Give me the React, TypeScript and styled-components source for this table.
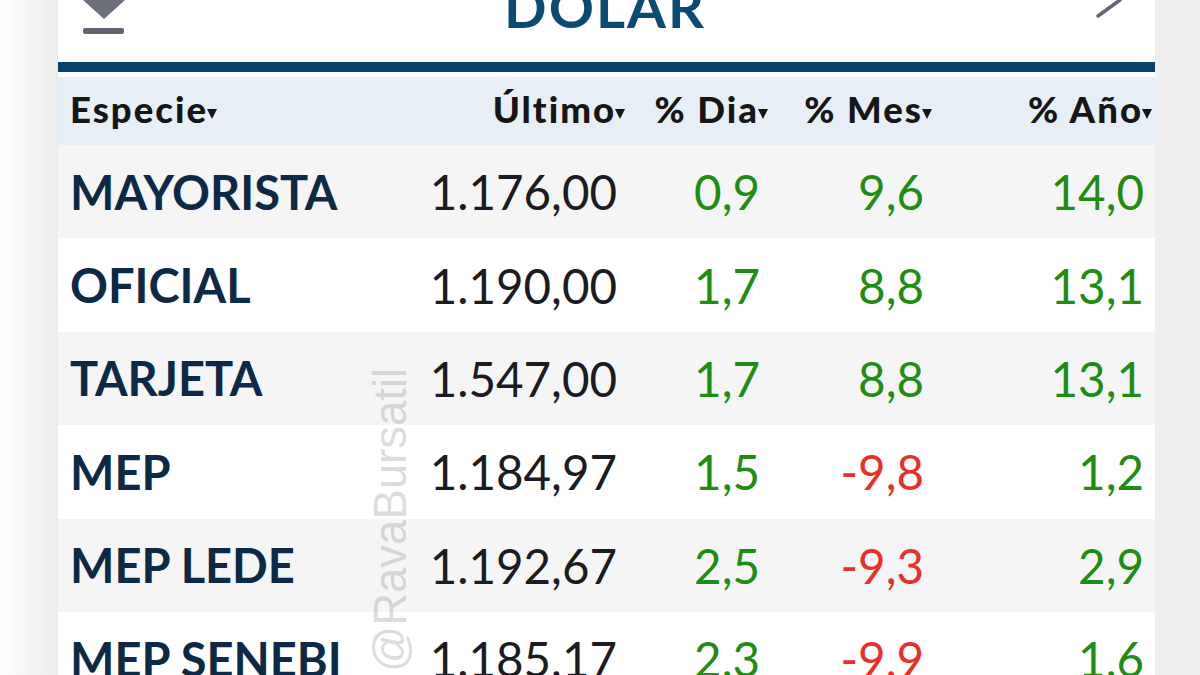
import styled, { createGlobalStyle } from 'styled-components';

const GlobalStyle = createGlobalStyle`
    html, body {
        margin: 0;
        padding: 0;
        overflow: hidden;
    }
    body {
        width: 1200px;
        height: 675px;
        background: linear-gradient(to right, #ffffff 0px, #ececec 56px, #eeeeee 100%);
        font-family: Lato, "Noto Sans", sans-serif;
    }
`;

const Page = styled.div`
    display: flex;
    height: 675px;
    padding: 0 45px 0 58px;
    box-sizing: border-box;
`;

const Card = styled.div`
    position: relative;
    flex: 1;
    background: #ffffff;
`;

const TitleBar = styled.div`
    display: grid;
    grid-template-columns: 80px 1fr 80px;
    align-items: start;
    height: 62px;
    border-bottom: 10px solid #08416a;
    margin-bottom: 5px;
    overflow: hidden;
`;

const IconSlot = styled.div<{ $align: 'start' | 'end' }>`
    display: flex;
    justify-content: ${(p) => (p.$align === 'start' ? 'flex-start' : 'flex-end')};
    padding: ${(p) => (p.$align === 'start' ? '0 0 0 24px' : '0 30px 0 0')};
`;

const Title = styled.h1`
    margin: -21px 0 0 0;
    text-align: center;
    font-size: 56px;
    line-height: 56px;
    font-weight: 700;
    letter-spacing: 2px;
    color: #0d4a72;
    padding-right: 3px;
`;

const Grid = styled.div`
    display: grid;
    grid-template-columns: 342px 228px 143px 164px 1fr;
`;

const Row = styled.div<{ $shade?: boolean; $head?: boolean }>`
    display: contents;
    & > div {
        background: ${(p) => (p.$head ? '#e8eef5' : p.$shade ? '#f5f5f5' : '#ffffff')};
        height: ${(p) => (p.$head ? '68px' : '93.4px')};
    }
`;

const HeadCell = styled.div<{ $left?: boolean }>`
    display: flex;
    align-items: center;
    justify-content: ${(p) => (p.$left ? 'flex-start' : 'flex-end')};
    padding: ${(p) => (p.$left ? '0 0 5px 12px' : '0 3px 5px 0')};
    box-sizing: border-box;
    font-size: 36.5px;
    font-weight: 900;
    letter-spacing: 2px;
    color: #161616;
    white-space: nowrap;
`;

const Caret = styled.span`
    display: inline-block;
    width: 0;
    height: 0;
    margin: 10px 0 0 -1px;
    border-left: 5px solid transparent;
    border-right: 5px solid transparent;
    border-top: 10px solid #161616;
`;

const NameCell = styled.div`
    display: flex;
    align-items: center;
    padding-left: 12px;
    font-size: 47px;
    font-weight: 700;
    color: #0e2945;
    white-space: nowrap;
`;

const ValueCell = styled.div<{ $tone?: 'up' | 'down' }>`
    display: flex;
    align-items: center;
    justify-content: flex-end;
    padding-right: 11px;
    font-size: 47.5px;
    font-weight: 400;
    color: ${(p) => (p.$tone === 'up' ? '#1f8c14' : p.$tone === 'down' ? '#e5302c' : '#1a1c22')};
    white-space: nowrap;
`;

const Watermark = styled.div`
    position: absolute;
    left: 310px;
    top: 672px;
    transform: rotate(-90deg);
    transform-origin: 0 0;
    font-family: "Liberation Sans", Arial, sans-serif;
    font-size: 45.5px;
    line-height: 46px;
    color: rgba(140, 130, 120, 0.3);
    white-space: nowrap;
    pointer-events: none;
`;

type Quote = { name: string; last: string; day: string; month: string; year: string };

const quotes: Quote[] = [
    { name: 'MAYORISTA', last: '1.176,00', day: '0,9', month: '9,6', year: '14,0' },
    { name: 'OFICIAL', last: '1.190,00', day: '1,7', month: '8,8', year: '13,1' },
    { name: 'TARJETA', last: '1.547,00', day: '1,7', month: '8,8', year: '13,1' },
    { name: 'MEP', last: '1.184,97', day: '1,5', month: '-9,8', year: '1,2' },
    { name: 'MEP LEDE', last: '1.192,67', day: '2,5', month: '-9,3', year: '2,9' },
    { name: 'MEP SENEBI', last: '1.185,17', day: '2,3', month: '-9,9', year: '1,6' },
];

const tone = (v: string) => (v.startsWith('-') ? 'down' : 'up');

const DownloadIcon = () => (
    <svg width="44" height="36" viewBox="0 0 44 36">
        <polygon points="1,-6 43,-6 43,0 22,19 1,0" fill="#6b7079" />
        <rect x="1" y="28" width="41" height="6" rx="2" fill="#5f6670" />
    </svg>
);

const ArrowIcon = () => (
    <svg width="32" height="22" viewBox="0 0 32 22">
        <line x1="5" y1="16" x2="27" y2="0" stroke="#685f78" strokeWidth="3.5" strokeLinecap="round" />
    </svg>
);

const headers = ['Último', '% Dia', '% Mes', '% Año'];

const App = () => {
    return (
        <>
            <GlobalStyle />
            <Page>
                <Card>
                    <TitleBar>
                        <IconSlot $align="start">
                            <DownloadIcon />
                        </IconSlot>
                        <Title>DOLAR</Title>
                        <IconSlot $align="end">
                            <ArrowIcon />
                        </IconSlot>
                    </TitleBar>
                    <Grid>
                        <Row $head>
                            <HeadCell $left>
                                Especie
                                <Caret />
                            </HeadCell>
                            {headers.map((h) => (
                                <HeadCell key={h}>
                                    {h}
                                    <Caret />
                                </HeadCell>
                            ))}
                        </Row>
                        {quotes.map((q, i) => (
                            <Row key={q.name} $shade={i % 2 === 0}>
                                <NameCell>{q.name}</NameCell>
                                <ValueCell>{q.last}</ValueCell>
                                <ValueCell $tone={tone(q.day)}>{q.day}</ValueCell>
                                <ValueCell $tone={tone(q.month)}>{q.month}</ValueCell>
                                <ValueCell $tone={tone(q.year)}>{q.year}</ValueCell>
                            </Row>
                        ))}
                    </Grid>
                    <Watermark>@RavaBursatil</Watermark>
                </Card>
            </Page>
        </>
    );
};

export default App;
